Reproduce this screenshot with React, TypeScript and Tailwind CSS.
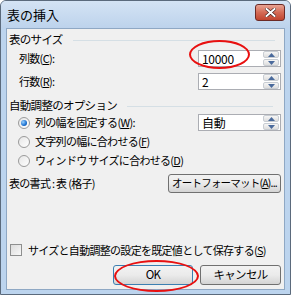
import React from "react";

const font = { fontFamily: '"Noto Sans CJK JP", "Noto Sans", sans-serif' };

function Spin() {
  return (
    <div className="flex flex-col w-[16px] h-[15px] mr-[1px] gap-[1px]">
      {[0, 1].map((i) => (
        <div
          key={i}
          className="flex-1 flex items-center justify-center border border-[#c8cdd3] rounded-[2px] bg-gradient-to-b from-[#f6f6f6] to-[#dedede]"
        >
          <svg width="7" height="4" viewBox="0 0 7 4">
            {i === 0 ? (
              <path d="M0 4 L3.5 0 L7 4 Z" fill="#4a6a9c" />
            ) : (
              <path d="M0 0 L3.5 4 L7 0 Z" fill="#4a6a9c" />
            )}
          </svg>
        </div>
      ))}
    </div>
  );
}

function SpinBox({ value }: { value: string }) {
  return (
    <div className="w-[83px] h-[17px] bg-white border border-[#abadb3] flex items-center">
      <span className="flex-1 pl-[3px] text-[12px] leading-none text-black tracking-[-0.3px]">{value}</span>
      <Spin />
    </div>
  );
}

function Radio({ checked }: { checked?: boolean }) {
  return (
    <div className="w-[12px] h-[12px] rounded-full border border-[#9a9a9a] bg-gradient-to-br from-[#e6e6e6] to-[#ffffff] flex items-center justify-center shrink-0">
      {checked && (
        <div className="w-[6px] h-[6px] rounded-full bg-[radial-gradient(circle_at_35%_35%,#9ad2ff,#1a6fcf_60%,#0d4a9a)]" />
      )}
    </div>
  );
}

function U({ c }: { c: string }) {
  return <span className="underline underline-offset-[1px]">{c}</span>;
}

function Btn({ children, w, def }: { children: React.ReactNode; w: string; def?: boolean }) {
  return (
    <div
      className={`${w} h-[20px] rounded-[3px] border ${
        def ? "border-[#3c7fb1]" : "border-[#707070]"
      } bg-gradient-to-b from-[#f2f2f2] via-[#ebebeb] to-[#d4d4d4] flex items-center justify-center text-[11.5px] leading-none text-black whitespace-nowrap`}
    >
      {children}
    </div>
  );
}

export default function App() {
  return (
    <div
      style={font}
      className="w-[291px] h-[295px] bg-[#bcd4ee] border border-[#5b6a7c] rounded-t-[6px] flex flex-col overflow-hidden relative tracking-[-0.7px]"
    >
      {/* title bar */}
      <div className="h-[27px] flex items-center pl-[6px] pr-[5px] bg-gradient-to-b from-[#d4e3f4] to-[#bdd3ec] shrink-0">
        <span className="text-[13px] text-black tracking-[0px] flex-1 leading-none">表の挿入</span>
        <div className="w-[30px] h-[17px] -mt-[4px] rounded-[3px] border border-[#6b2a26] bg-gradient-to-b from-[#e8a393] via-[#d46a55] to-[#c0432e] flex items-center justify-center">
          <svg width="11" height="9" viewBox="0 0 11 9">
            <path d="M1.5 1 L9.5 8 M9.5 1 L1.5 8" stroke="#3a1a18" strokeWidth="3.2" strokeLinecap="square" />
            <path d="M1.5 1 L9.5 8 M9.5 1 L1.5 8" stroke="#ffffff" strokeWidth="2" strokeLinecap="square" />
          </svg>
        </div>
      </div>

      {/* client */}
      <div className="flex-1 mx-[5px] mb-[4px] bg-[#f0f0f0] border border-[#8fa8c4] flex flex-col text-[11px] leading-none text-black pl-[2px] pr-[3px] whitespace-nowrap">
        {/* 表のサイズ */}
        <div className="h-[16px] mt-[3px] flex items-center text-[11.5px]">
          <span>表のサイズ</span>
          <div className="flex-1 h-px bg-[#d5dfe5] ml-[10px] mr-[6px]" />
        </div>
        <div className="mt-[2px] h-[17px] flex items-center">
          <span className="pl-[10px] flex-1">
            列数(<U c="C" />):
          </span>
          <SpinBox value="10000" />
        </div>
        <div className="mt-[6px] h-[17px] flex items-center">
          <span className="pl-[10px] flex-1">
            行数(<U c="R" />):
          </span>
          <SpinBox value="2" />
        </div>

        {/* 自動調整のオプション */}
        <div className="h-[16px] mt-[8px] flex items-center text-[11.5px]">
          <span>自動調整のオプション</span>
          <div className="flex-1 h-px bg-[#d5dfe5] ml-[10px] mr-[8px]" />
        </div>
        <div className="h-[17px] mt-[0px] flex items-center">
          <div className="pl-[9px] flex items-center gap-[5px] flex-1">
            <Radio checked />
            <span>
              列の幅を固定する(<U c="W" />):
            </span>
          </div>
          <SpinBox value="自動" />
        </div>
        <div className="h-[17px] mt-[2px] flex items-center pl-[9px] gap-[5px]">
          <Radio />
          <span>
            文字列の幅に合わせる(<U c="F" />)
          </span>
        </div>
        <div className="h-[17px] mt-[2px] flex items-center pl-[9px] gap-[5px]">
          <Radio />
          <span>
            ウィンドウ サイズに合わせる(<U c="D" />)
          </span>
        </div>

        {/* 表の書式 */}
        <div className="h-[19px] mt-[5px] flex items-center">
          <span className="flex-1">表の書式 : 表 (格子)</span>
          <div className="w-[113px] h-[19px] rounded-[3px] border border-[#707070] bg-gradient-to-b from-[#f2f2f2] via-[#ebebeb] to-[#d4d4d4] flex items-center justify-center text-[10.5px] tracking-[-0.8px]">
            オートフォーマット(<U c="A" />)...
          </div>
        </div>

        <div className="flex-1" />

        {/* checkbox */}
        <div className="h-[14px] flex items-center gap-[6px] pl-[1px]">
          <div className="w-[12px] h-[12px] border border-[#8e8f8f] bg-gradient-to-br from-[#dcdcdc] to-[#f8f8f8] shrink-0" />
          <span>
            サイズと自動調整の設定を既定値として保存する(<U c="S" />)
          </span>
        </div>

        <div className="mt-[8px] mb-[4px] flex justify-end gap-[7px]">
          <Btn w="w-[80px]" def>
            OK
          </Btn>
          <Btn w="w-[81px]">キャンセル</Btn>
        </div>
      </div>

      {/* red annotation ellipses */}
      <div className="absolute left-[188px] top-[39px] w-[61px] h-[29px] rounded-[50%] border-2 border-[#e81010] pointer-events-none" />
      <div className="absolute left-[113px] top-[259px] w-[85px] h-[32px] rounded-[50%] border-2 border-[#e81010] pointer-events-none" />
    </div>
  );
}
